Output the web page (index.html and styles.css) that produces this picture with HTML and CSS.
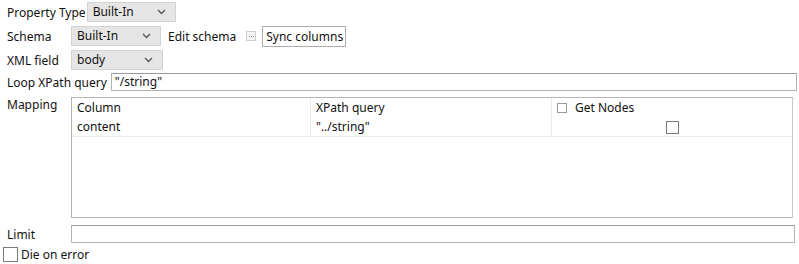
FILE: index.html
```html
<!DOCTYPE html>
<html lang="en">
<head>
  <meta charset="utf-8" />
  <title>XML Extract</title>
  <link rel="stylesheet" href="styles.css">
</head>
<body>
  <div class="form">
    <div class="row row-property">
      <span class="label">Property Type</span>
      <div class="combo combo-property">
        <span>Built-In</span>
        <svg class="arrow" width="9" height="6" viewBox="0 0 9 6"><path d="M1 1 L4.5 4.5 L8 1" fill="none" stroke="#555" stroke-width="1.3"/></svg>
      </div>
    </div>

    <div class="row row-schema">
      <span class="label label-fixed">Schema</span>
      <div class="combo combo-schema">
        <span>Built-In</span>
        <svg class="arrow" width="9" height="6" viewBox="0 0 9 6"><path d="M1 1 L4.5 4.5 L8 1" fill="none" stroke="#555" stroke-width="1.3"/></svg>
      </div>
      <span class="edit-label">Edit schema</span>
      <span class="dots-btn"><svg width="5" height="1" viewBox="0 0 5 1"><rect x="0" y="0" width="1" height="1" fill="#999"/><rect x="2" y="0" width="1" height="1" fill="#999"/><rect x="4" y="0" width="1" height="1" fill="#999"/></svg></span>
      <button class="sync-btn">Sync columns</button>
    </div>

    <div class="row row-xml">
      <span class="label label-fixed">XML field</span>
      <div class="combo combo-xml">
        <span>body</span>
        <svg class="arrow" width="9" height="6" viewBox="0 0 9 6"><path d="M1 1 L4.5 4.5 L8 1" fill="none" stroke="#555" stroke-width="1.3"/></svg>
      </div>
    </div>

    <div class="row row-loop">
      <span class="label">Loop XPath query</span>
      <div class="text-input loop-input">"/string"</div>
    </div>

    <div class="row row-mapping">
      <span class="label label-fixed mapping-label">Mapping</span>
      <div class="table">
        <div class="table-row table-head">
          <div class="cell col-column">Column</div>
          <div class="cell col-xpath">XPath query</div>
          <div class="cell col-nodes"><span class="mini-check"></span>Get Nodes</div>
        </div>
        <div class="table-row table-data">
          <div class="cell col-column">content</div>
          <div class="cell col-xpath">"../string"</div>
          <div class="cell col-nodes center"><span class="check"></span></div>
        </div>
      </div>
    </div>

    <div class="row row-limit">
      <span class="label label-fixed">Limit</span>
      <div class="text-input limit-input"></div>
    </div>

    <div class="row row-die">
      <span class="check die-check"></span>
      <span>Die on error</span>
    </div>
  </div>
</body>
</html>
```

FILE: styles.css
```css
body {
  margin: 0;
  background-color: #fff;
  font-family: "Noto Sans", "Open Sans", Arial, sans-serif;
  font-size: 12px;
  color: #111;
}

.form {
  width: 799px;
  height: 264px;
  padding-top: 2px;
  box-sizing: border-box;
}

.row {
  display: flex;
  align-items: center;
}

.label {
  padding-left: 7px;
  white-space: nowrap;
}

.label-fixed {
  width: 64px;
  flex: none;
}

.combo {
  display: flex;
  align-items: center;
  justify-content: space-between;
  box-sizing: border-box;
  height: 20px;
  padding: 0 9px 0 5px;
  background-color: #e5e5e5;
  border: 1px solid #d4d4d4;
}

.combo span {
  margin-top: -2px;
}

.arrow {
  flex: none;
}

.row-property {
  height: 20px;
}

.combo-property {
  width: 89px;
  margin-left: 1px;
}

.row-schema {
  height: 22px;
  margin-top: 3px;
}

.combo-schema {
  width: 90px;
}

.edit-label {
  margin-left: 7px;
}

.dots-btn {
  display: flex;
  align-items: center;
  justify-content: center;
  width: 8px;
  height: 8px;
  margin-left: 10px;
  border: 1px solid #cfcfcf;
  background-color: #f4f4f4;
}

.sync-btn {
  height: 21px;
  margin-left: 6px;
  padding: 0 2px 0 3px;
  font: inherit;
  color: inherit;
  background-color: #fff;
  border: 1px solid #adadad;
  border-radius: 0;
}

.row-xml {
  height: 20px;
  margin-top: 3px;
}

.combo-xml {
  width: 92px;
}

.row-loop {
  height: 18px;
  margin-top: 3px;
}

.text-input {
  box-sizing: border-box;
  height: 18px;
  padding: 0 3px;
  line-height: 15px;
  background-color: #fff;
  border: 1px solid #b4b4b4;
  border-top-color: #9c9c9c;
}

.loop-input {
  width: 686px;
  margin-left: 4px;
}

.row-mapping {
  align-items: flex-start;
  margin-top: 6px;
}

.mapping-label {
  margin-top: 0;
  line-height: 16px;
}

.table {
  box-sizing: border-box;
  width: 722px;
  height: 121px;
  border: 1px solid #b4b4b4;
  border-right-color: #c8c8c8;
}

.table-row {
  display: flex;
  height: 19px;
}

.table-data {
  border-bottom: 1px solid #ececec;
}

.cell {
  box-sizing: border-box;
  display: flex;
  align-items: center;
  padding-left: 5px;
  border-right: 1px solid #ececec;
}

.col-column {
  width: 239px;
}

.col-xpath {
  width: 241px;
}

.col-nodes {
  width: 240px;
  padding-left: 5px;
  border-right: none;
}

.center {
  justify-content: center;
  padding-left: 0;
}

.mini-check {
  width: 8px;
  height: 8px;
  margin-right: 8px;
  border: 1px solid #999;
}

.check {
  display: block;
  box-sizing: border-box;
  width: 13px;
  height: 13px;
  border: 1px solid #7a7a7a;
  background-color: #fff;
}

.table-data .check {
  margin-top: 2px;
}

.row-limit {
  height: 18px;
  margin-top: 7px;
}

.limit-input {
  width: 724px;
}

.row-die {
  height: 15px;
  margin-top: 4px;
  padding-left: 3px;
}

.die-check {
  width: 15px;
  height: 15px;
  margin-right: 3px;
}
```
